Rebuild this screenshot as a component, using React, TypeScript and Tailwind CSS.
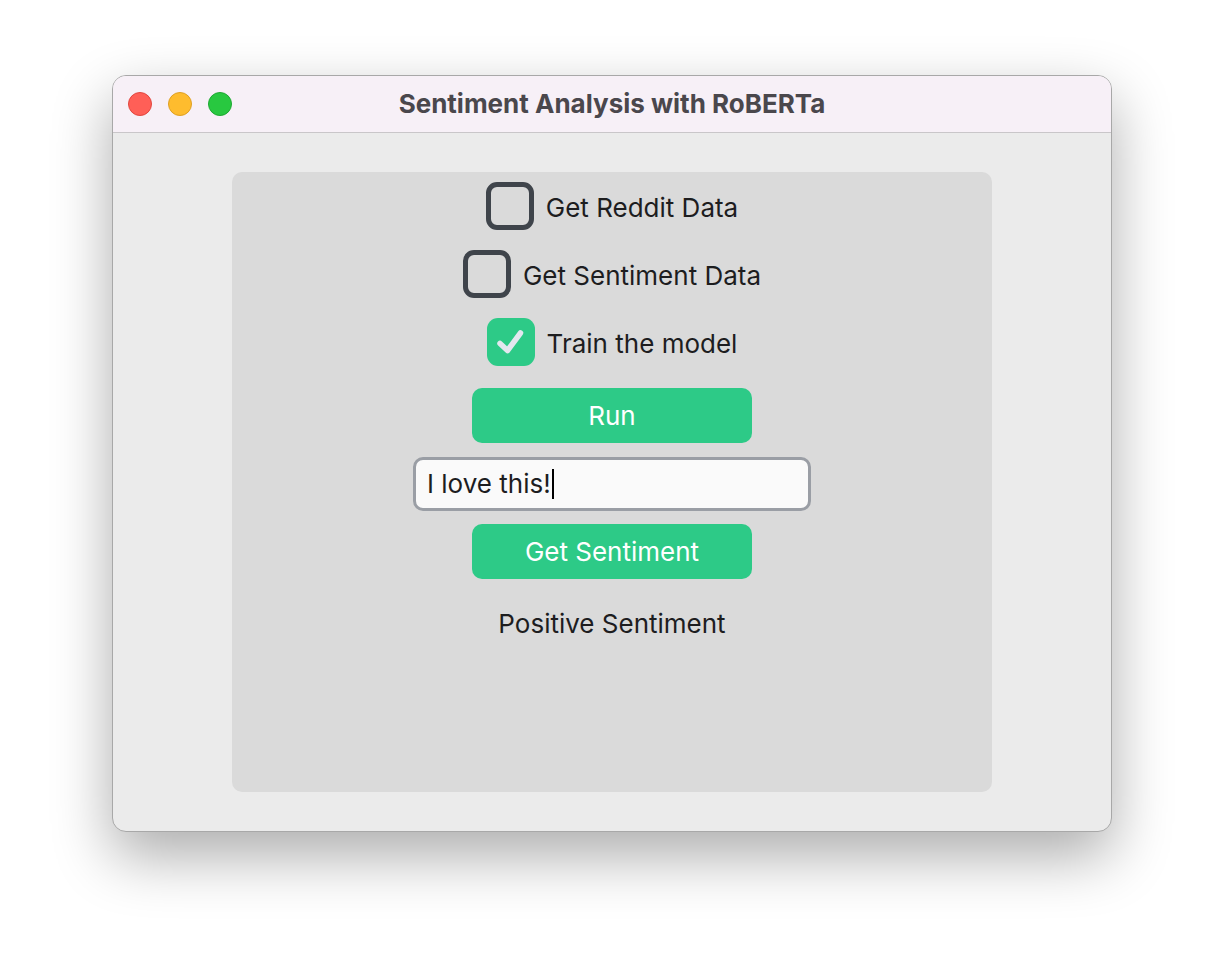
import React from "react";

const font = { fontFamily: "Inter, 'Noto Sans', 'Liberation Sans', sans-serif" };

function Box({ checked }: { checked?: boolean }) {
  if (checked) {
    return (
      <div className="w-[48px] h-[48px] rounded-[11px] bg-[#2dca87] flex items-center justify-center shrink-0">
        <svg width="32" height="32" viewBox="0 0 32 32">
          <path d="M5 17.5 L12.5 24.5 L25.5 7" fill="none" stroke="#e3e7ef" strokeWidth="5.5" strokeLinecap="round" strokeLinejoin="round" />
        </svg>
      </div>
    );
  }
  return <div className="w-[48px] h-[48px] rounded-[11px] border-[5px] border-[#3f444b] shrink-0" />;
}

function Row({ label, checked, className }: { label: string; checked?: boolean; className?: string }) {
  return (
    <div className={"flex items-center gap-[12px] h-[48px] " + (className ?? "")}>
      <Box checked={checked} />
      <span className="text-[26px] text-[#1d1d1f] leading-none pt-[3px]">{label}</span>
    </div>
  );
}

export default function App() {
  return (
    <div className="w-[1224px] h-[980px] bg-white pt-[75px] pl-[112px]" style={font}>
      <div className="w-[1000px] h-[757px] rounded-[14px] border border-[#a8a8a8] bg-[#ebebeb] shadow-[0_24px_60px_rgba(0,0,0,0.33)] overflow-hidden flex flex-col">
        <div className="h-[57px] shrink-0 bg-[#f7f0f7] border-b border-[#c9c6c9] flex items-center relative">
          <div className="flex items-center gap-[16px] pl-[15px]">
            <div className="w-[24px] h-[24px] rounded-full bg-[#ff5f57] border border-[#e2463f]" />
            <div className="w-[24px] h-[24px] rounded-full bg-[#febc2e] border border-[#dfa023]" />
            <div className="w-[24px] h-[24px] rounded-full bg-[#28c840] border border-[#1ea832]" />
          </div>
          <div className="absolute inset-0 flex items-center justify-center pointer-events-none">
            <span className="text-[26px] font-bold text-[#4a474c] leading-none">Sentiment Analysis with RoBERTa</span>
          </div>
        </div>
        <div className="flex-1 pt-[39px] px-[119px]">
          <div className="w-[760px] h-[620px] rounded-[10px] bg-[#dadada] flex flex-col items-center pt-[10px]">
            <Row label="Get Reddit Data" />
            <Row label="Get Sentiment Data" className="mt-[20px]" />
            <Row label="Train the model" checked className="mt-[20px]" />
            <button className="mt-[22px] w-[280px] h-[55px] rounded-[10px] bg-[#2dca87] text-white text-[26px] leading-none">Run</button>
            <div className="mt-[14px] w-[398px] h-[54px] rounded-[10px] border-[3px] border-[#9a9ea5] bg-[#fafafa] flex items-center pl-[11px]">
              <span className="text-[26px] text-[#1d1d1f] leading-none">I love this!</span>
              <span className="w-[2px] h-[30px] bg-black ml-[1px]" />
            </div>
            <button className="mt-[13px] w-[280px] h-[55px] rounded-[10px] bg-[#2dca87] text-white text-[26px] leading-none">Get Sentiment</button>
            <div className="mt-[32px] text-[26px] text-[#1d1d1f] leading-none">Positive Sentiment</div>
          </div>
        </div>
      </div>
    </div>
  );
}
